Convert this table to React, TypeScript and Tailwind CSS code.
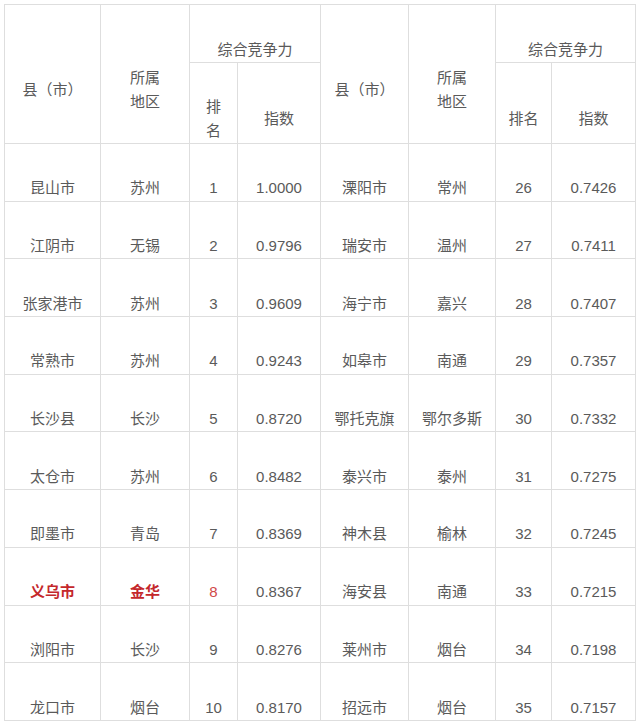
import React from "react";

type Row = [string, string, string, string];

const left: Row[] = [
  ["昆山市", "苏州", "1", "1.0000"],
  ["江阴市", "无锡", "2", "0.9796"],
  ["张家港市", "苏州", "3", "0.9609"],
  ["常熟市", "苏州", "4", "0.9243"],
  ["长沙县", "长沙", "5", "0.8720"],
  ["太仓市", "苏州", "6", "0.8482"],
  ["即墨市", "青岛", "7", "0.8369"],
  ["义乌市", "金华", "8", "0.8367"],
  ["浏阳市", "长沙", "9", "0.8276"],
  ["龙口市", "烟台", "10", "0.8170"],
];

const right: Row[] = [
  ["溧阳市", "常州", "26", "0.7426"],
  ["瑞安市", "温州", "27", "0.7411"],
  ["海宁市", "嘉兴", "28", "0.7407"],
  ["如皋市", "南通", "29", "0.7357"],
  ["鄂托克旗", "鄂尔多斯", "30", "0.7332"],
  ["泰兴市", "泰州", "31", "0.7275"],
  ["神木县", "榆林", "32", "0.7245"],
  ["海安县", "南通", "33", "0.7215"],
  ["莱州市", "烟台", "34", "0.7198"],
  ["招远市", "烟台", "35", "0.7157"],
];

const cell = "border border-[#dedede] text-center align-middle pt-[32px] px-0 pb-0";

export default function App() {
  return (
    <div
      className="bg-white w-[640px] h-[723px] overflow-hidden pt-[4px] pl-[4px] text-[15px] text-[#5a5a5a]"
      style={{ fontFamily: '"Liberation Sans", "Noto Sans CJK SC", sans-serif' }}
    >
      <table className="border-collapse table-fixed w-[631px] leading-[24px]">
        <colgroup>
          <col className="w-[96px]" />
          <col className="w-[89px]" />
          <col className="w-[48px]" />
          <col className="w-[83px]" />
          <col className="w-[88px]" />
          <col className="w-[87px]" />
          <col className="w-[56px]" />
          <col className="w-[84px]" />
        </colgroup>
        <thead className="font-normal">
          <tr className="h-[58px]">
            <th rowSpan={2} className={`${cell} font-normal`}>县（市）</th>
            <th rowSpan={2} className={`${cell} font-normal`}>
              所属
              <br />
              地区
            </th>
            <th colSpan={2} className={`${cell} font-normal`}>综合竞争力</th>
            <th rowSpan={2} className={`${cell} font-normal`}>县（市）</th>
            <th rowSpan={2} className={`${cell} font-normal`}>
              所属
              <br />
              地区
            </th>
            <th colSpan={2} className={`${cell} font-normal`}>综合竞争力</th>
          </tr>
          <tr className="h-[81px]">
            <th className={`${cell} font-normal`}>
              排
              <br />
              名
            </th>
            <th className={`${cell} font-normal`}>指数</th>
            <th className={`${cell} font-normal`}>排名</th>
            <th className={`${cell} font-normal`}>指数</th>
          </tr>
        </thead>
        <tbody>
          {left.map((l, i) => {
            const r = right[i];
            const hot = l[0] === "义乌市";
            return (
              <tr key={l[0]} className="h-[57.7px]">
                <td className={`${cell} ${hot ? "text-[#c4272b] font-bold" : ""}`}>{l[0]}</td>
                <td className={`${cell} ${hot ? "text-[#c4272b] font-bold" : ""}`}>{l[1]}</td>
                <td className={`${cell} ${hot ? "text-[#d0494a]" : ""}`}>{l[2]}</td>
                <td className={cell}>{l[3]}</td>
                <td className={cell}>{r[0]}</td>
                <td className={cell}>{r[1]}</td>
                <td className={cell}>{r[2]}</td>
                <td className={cell}>{r[3]}</td>
              </tr>
            );
          })}
        </tbody>
      </table>
    </div>
  );
}
